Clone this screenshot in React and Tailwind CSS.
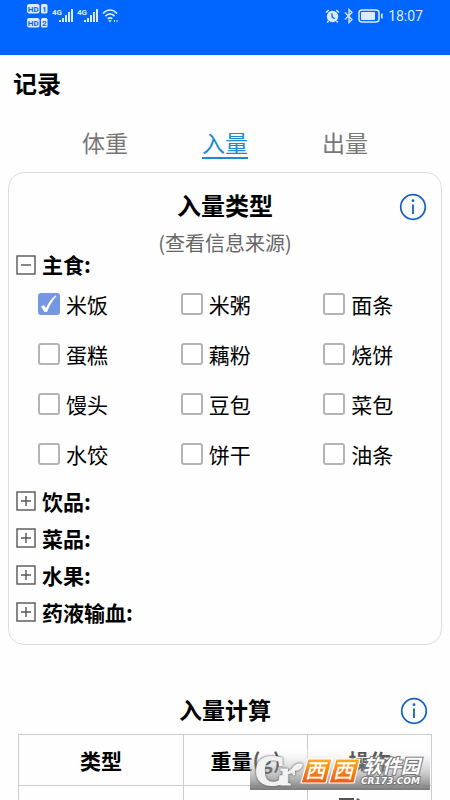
import React, { useState } from 'react';

const foods = ['米饭', '米粥', '面条', '蛋糕', '藕粉', '烧饼', '馒头', '豆包', '菜包', '水饺', '饼干', '油条'];
const groups = ['饮品:', '菜品:', '水果:', '药液输血:'];
const tabs = ['体重', '入量', '出量'];

const HdBadge = ({ n }) => (
  <svg width="22" height="10" viewBox="0 0 22 10" fontFamily="Roboto, sans-serif" aria-hidden="true">
    <rect x="0" y="0" width="12.500" height="9.400" rx="2" fill="#dcebff" />
    <rect x="14" y="0" width="6.500" height="9.400" rx="1.500" fill="#dcebff" />
    <text x="6.300" y="7.700" textAnchor="middle" fontSize="8" fontWeight="700" fill="#0066ff">HD</text>
    <text x="17.300" y="7.700" textAnchor="middle" fontSize="8" fontWeight="700" fill="#0066ff">{n}</text>
  </svg>
);

const Signal = () => (
  <svg width="25" height="16" viewBox="0 0 25 16" fill="#dcebff" fontFamily="Roboto, sans-serif" aria-hidden="true">
    <text x="0" y="7" fontSize="8" fontWeight="700">4G</text>
    <rect x="7" y="12" width="2" height="2" />
    <rect x="10" y="10" width="2" height="4" />
    <rect x="13" y="7" width="2" height="7" />
    <rect x="16" y="4" width="2" height="10" />
    <rect x="19" y="1" width="2" height="13" />
  </svg>
);

const StatusBar = () => (
  <div className="flex h-[55px] items-start justify-between bg-[#0066ff] px-[27px] text-[#dcebff]">
    <div className="flex items-start">
      <div className="flex w-[25px] flex-col gap-1 pt-1">
        <HdBadge n="1" />
        <HdBadge n="2" />
      </div>
      <div className="flex pt-2">
        <Signal />
        <Signal />
        <svg width="17" height="16" viewBox="0 0 17 16" fill="none" stroke="#dcebff" strokeWidth="1.7" aria-hidden="true">
          <path d="M1 5.5C5 .8 11 .8 15 5.5M3.4 8.2c2.8-3 6.400-3 9.200 0M5.700 10.900c1.600-1.500 3-1.500 4.600 0" />
          <path d="M6.300 12.300h3.400L8 14.500z" fill="#dcebff" stroke="none" />
          <path d="M12.500 12v2M15 12v2" strokeWidth="1" />
        </svg>
      </div>
    </div>
    <div className="flex items-center pt-[6px]">
      <svg width="15" height="15" viewBox="0 0 15 15" fill="none" aria-hidden="true">
        <circle cx="7.500" cy="7.500" r="5.700" fill="#dcebff" />
        <path d="M1 3.500L3.800 1M14 3.500L11.200 1M3.500 12l-1.300 1.500M11.500 12l1.300 1.500" stroke="#dcebff" strokeWidth="1.600" />
        <path d="M7 4.300v3.500l2.700 2" stroke="#0066ff" strokeWidth="1.300" />
      </svg>
      <svg className="ml-1" width="10" height="16" viewBox="0 0 10 16" fill="none" stroke="#dcebff" strokeWidth="1.300" aria-hidden="true">
        <path d="M1 4.500l7 7L5 14.500v-13l3 3-7 7" />
      </svg>
      <svg className="ml-1" width="26" height="14" viewBox="0 0 26 14" fill="none" aria-hidden="true">
        <rect x="1" y="1" width="20" height="12" rx="3" stroke="#dcebff" strokeWidth="1.500" />
        <rect x="3" y="3" width="14" height="8" rx="1" fill="#dcebff" />
        <path d="M23.800 4.500v5" stroke="#dcebff" strokeWidth="1.700" />
      </svg>
      <span className="ml-1 font-[Roboto,sans-serif] text-sm leading-5">18:07</span>
    </div>
  </div>
);

const InfoButton = () => (
  <button type="button" aria-label="说明" className="flex h-7 w-7 items-center justify-center">
    <svg width="28" height="28" viewBox="0 0 28 28" fill="none" stroke="#1460c4">
      <circle cx="14" cy="14" r="12.300" strokeWidth="1.700" />
      <path d="M14 11.500v9.500" strokeWidth="1.800" />
      <circle cx="14" cy="7.700" r="1.400" fill="#1460c4" stroke="none" />
    </svg>
  </button>
);

// Heading centred between a spacer and the info button
const SectionHead = ({ children, className }) => (
  <div className="grid grid-cols-[28px_1fr_28px] items-center">
    <span />
    <h2 className={`pb-1 text-center font-bold leading-8 ${className}`}>{children}</h2>
    <InfoButton />
  </div>
);

const GroupToggle = ({ label, open, onClick }) => (
  <button type="button" aria-expanded={open} onClick={onClick} className="flex items-center gap-[5px] text-[21px] font-bold">
    <svg width="21" height="21" viewBox="0 0 21 21" fill="none" stroke="#555" aria-hidden="true">
      <rect x="1" y="1" width="18" height="18" strokeWidth="1.400" />
      <path d={open ? 'M5 10h10' : 'M5 10h10M10 5v10'} strokeWidth="1.400" />
    </svg>
    {label}
  </button>
);

const FoodOption = ({ name, checked, onChange }) => (
  <label className="flex items-center gap-[6px] text-[21px] leading-8">
    <span className="grid">
      <input
        type="checkbox"
        checked={checked}
        onChange={onChange}
        className="col-start-1 row-start-1 h-[22px] w-[22px] appearance-none rounded-[3px] border-2 border-[#b4b4b4] bg-white checked:border-[#7596e2] checked:bg-[#7596e2]"
      />
      {checked && (
        <svg className="pointer-events-none col-start-1 row-start-1" width="22" height="22" viewBox="0 0 22 22" aria-hidden="true">
          <path d="M3 13.500l3-1.500 2 3C10.500 9.500 13.500 5.500 17.500 2.500l1 .5C14.500 7.500 11.500 12.500 9 19H6.500z" fill="#fff" />
        </svg>
      )}
    </span>
    {name}
  </label>
);

const RowActions = () => (
  <div className="flex items-start justify-center gap-5 pt-3">
    <button type="button" aria-label="编辑">
      <svg width="21" height="24" viewBox="0 0 21 24" fill="none" stroke="#555" strokeWidth="2">
        <path d="M15 1H1v19h18V9" />
        <path d="M8 13l11-12 2 2L10 15H8z" strokeWidth="1.500" />
      </svg>
    </button>
    <button type="button" aria-label="删除">
      <svg width="21" height="24" viewBox="0 0 21 24" fill="none" stroke="#555" strokeWidth="2">
        <path d="M2 7h17M7 7V4h7v3M4 7l1 15h11l1-15" />
      </svg>
    </button>
  </div>
);

const SiteBadge = () => (
  <svg width="180" height="40" viewBox="0 0 180 40" role="img" aria-label="西西软件园 CR173.COM">
    <defs>
      <linearGradient id="badgeShade" x1="0" y1="0" x2="0" y2="1">
        <stop offset="0" stopColor="#fff" stopOpacity="0.300" />
        <stop offset="0.500" stopColor="#b8b8b8" stopOpacity="0.600" />
        <stop offset="1" stopColor="#747474" stopOpacity="0.950" />
      </linearGradient>
      <linearGradient id="badgeTile" x1="0" y1="0" x2="0" y2="1">
        <stop offset="0" stopColor="#ffae1a" />
        <stop offset="1" stopColor="#ec5a18" />
      </linearGradient>
    </defs>
    <rect width="180" height="40" fill="url(#badgeShade)" />
    <g className="drop-shadow-[0_0_1px_#444]" fill="#f2f2f2" stroke="#f2f2f2" fontFamily="Liberation Serif, serif" fontWeight="700">
      <text x="5" y="35" fontSize="42" strokeWidth="2">C</text>
      <text x="30" y="35" fontSize="34" strokeWidth="1">r</text>
      <path d="M41 20c3-6 7-8 12-6-1 6-6 8-12 6z" stroke="none" />
    </g>
    <g fill="url(#badgeTile)" stroke="#fff" strokeWidth="1.200" strokeLinejoin="round">
      <path d="M58 9h24l-6 24H51z" />
      <path d="M86 9h24l-6 24H79z" />
    </g>
    <g fill="#fff" fontStyle="italic" fontWeight="500" fontSize="20">
      <text x="55" y="28">西</text>
      <text x="83" y="28">西</text>
    </g>
    <g fill="#fff" stroke="#777" strokeWidth="2" paintOrder="stroke" fontStyle="italic" fontWeight="700">
      <text x="113" y="23" fontSize="19">软件园</text>
      <text x="111" y="34" fontSize="9" fontFamily="DejaVu Sans, sans-serif">CR173.COM</text>
    </g>
  </svg>
);

export default function App() {
  const [tab, setTab] = useState('入量');
  const [picked, setPicked] = useState(['米饭']);
  const [opened, setOpened] = useState(['主食:']);

  const flip = (list, item) => (list.includes(item) ? list.filter((x) => x !== item) : [...list, item]);

  return (
    <div className="relative h-screen overflow-hidden bg-[#fefefe] font-['Noto_Sans_CJK_SC',sans-serif] text-black">
      <StatusBar />
      <h1 className="px-[13px] pt-3 text-2xl font-bold leading-8">记录</h1>

      <nav className="grid grid-cols-3 px-[45px] pt-7">
        {tabs.map((t) => (
          <button
            key={t}
            type="button"
            onClick={() => setTab(t)}
            className={`justify-self-center border-b-2 text-[23px] leading-[30px] ${t === tab ? 'border-[#1c8ccc] text-[#1c8ccc]' : 'border-transparent text-[#777]'}`}
          >
            {t}
          </button>
        ))}
      </nav>

      <main>
        <section className="mx-2 mt-[13px] rounded-2xl border border-[#ddd] px-[7px] pt-4 pb-[13px]">
          <div className="px-[7px]">
            <SectionHead className="text-2xl">入量类型</SectionHead>
          </div>
          <a href="#source" className="mt-2 block text-center text-[20px] leading-5 text-[#666]">(查看信息来源)</a>
          <div className="flex h-6 items-center">
            <GroupToggle label="主食:" open={opened.includes('主食:')} onClick={() => setOpened(flip(opened, '主食:'))} />
          </div>
          {opened.includes('主食:') && (
            <div className="-mr-8 grid grid-cols-3 gap-y-[18px] pt-[11px] pl-[22px]">
              {foods.map((f) => (
                <FoodOption key={f} name={f} checked={picked.includes(f)} onChange={() => setPicked(flip(picked, f))} />
              ))}
            </div>
          )}
          <div className="mt-[13px] flex flex-col">
            {groups.map((g) => (
              <div key={g} className="flex h-[37px] items-center">
                <GroupToggle label={g} open={opened.includes(g)} onClick={() => setOpened(flip(opened, g))} />
              </div>
            ))}
          </div>
        </section>

        <section className="mt-12 px-[18px]">
          <div className="px-1">
            <SectionHead className="text-[23px]">入量计算</SectionHead>
          </div>
          <table className="mt-[5px] w-full table-fixed border-collapse text-[21px] leading-[50px]">
            <thead>
              <tr>
                <th className="w-2/5 border border-[#ccc]">类型</th>
                <th className="w-3/10 border border-[#ccc]">重量(g)</th>
                <th className="border border-[#ccc]">操作</th>
              </tr>
            </thead>
            <tbody className="text-center">
              <tr>
                <td className="border border-[#ccc]">米饭</td>
                <td className="border border-[#ccc]" />
                <td className="border border-[#ccc] align-top leading-6">
                  <RowActions />
                </td>
              </tr>
            </tbody>
          </table>
        </section>
      </main>

      <div className="absolute right-5 bottom-0 pb-[10px]">
        <SiteBadge />
      </div>
    </div>
  );
}
